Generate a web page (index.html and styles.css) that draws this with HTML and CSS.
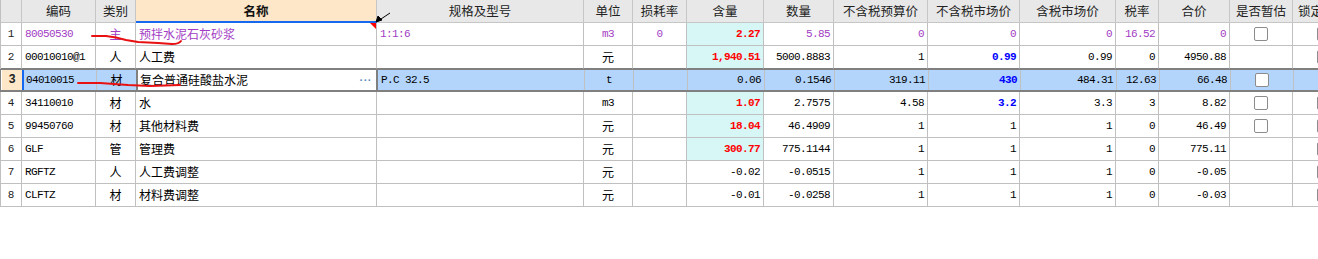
FILE: index.html
```html
<!DOCTYPE html>
<html lang="zh">
<head>
<meta charset="utf-8">
<title>材料明细</title>
<link rel="stylesheet" href="styles.css">
</head>
<body>
<div class="sheet">
  <div class="grid">
    <div class="row head">
      <div class="c"></div>
      <div class="c">编码</div>
      <div class="c">类别</div>
      <div class="c hname">名称</div>
      <div class="c">规格及型号</div>
      <div class="c">单位</div>
      <div class="c">损耗率</div>
      <div class="c">含量</div>
      <div class="c">数量</div>
      <div class="c">不含税预算价</div>
      <div class="c">不含税市场价</div>
      <div class="c">含税市场价</div>
      <div class="c">税率</div>
      <div class="c">合价</div>
      <div class="c">是否暂估</div>
      <div class="c lock">锁定</div>
    </div>

    <div class="row">
      <div class="c no">1</div>
      <div class="c m l p">80050530</div>
      <div class="c ctr p">主</div>
      <div class="c l p note">预拌水泥石灰砂浆</div>
      <div class="c m l p">1:1:6</div>
      <div class="c m ctr p">m3</div>
      <div class="c m ctr p">0</div>
      <div class="c m n r cy">2.27</div>
      <div class="c m n p">5.85</div>
      <div class="c m n p">0</div>
      <div class="c m n p">0</div>
      <div class="c m n p">0</div>
      <div class="c m n p">16.52</div>
      <div class="c m n p">0</div>
      <div class="c ctr"><span class="box"></span></div>
      <div class="c ctr"><span class="box"></span></div>
    </div>

    <div class="row pre">
      <div class="c no">2</div>
      <div class="c m l">00010010@1</div>
      <div class="c ctr">人</div>
      <div class="c l">人工费</div>
      <div class="c"></div>
      <div class="c ctr">元</div>
      <div class="c"></div>
      <div class="c m n r cy">1,940.51</div>
      <div class="c m n">5000.8883</div>
      <div class="c m n">1</div>
      <div class="c m n b">0.99</div>
      <div class="c m n">0.99</div>
      <div class="c m n">0</div>
      <div class="c m n">4950.88</div>
      <div class="c"></div>
      <div class="c ctr"><span class="box"></span></div>
    </div>

    <div class="row sel">
      <div class="c no cur">3</div>
      <div class="c m l first">04010015</div>
      <div class="c ctr beforeedit">材</div>
      <div class="c l edit"><span>复合普通硅酸盐水泥</span><span class="dots">···</span></div>
      <div class="c m l">P.C 32.5</div>
      <div class="c m ctr">t</div>
      <div class="c"></div>
      <div class="c m n">0.06</div>
      <div class="c m n">0.1546</div>
      <div class="c m n">319.11</div>
      <div class="c m n b">430</div>
      <div class="c m n">484.31</div>
      <div class="c m n">12.63</div>
      <div class="c m n">66.48</div>
      <div class="c ctr"><span class="box"></span></div>
      <div class="c ctr"><span class="box"></span></div>
    </div>

    <div class="row">
      <div class="c no">4</div>
      <div class="c m l">34110010</div>
      <div class="c ctr">材</div>
      <div class="c l">水</div>
      <div class="c"></div>
      <div class="c m ctr">m3</div>
      <div class="c"></div>
      <div class="c m n r cy">1.07</div>
      <div class="c m n">2.7575</div>
      <div class="c m n">4.58</div>
      <div class="c m n b">3.2</div>
      <div class="c m n">3.3</div>
      <div class="c m n">3</div>
      <div class="c m n">8.82</div>
      <div class="c ctr"><span class="box"></span></div>
      <div class="c ctr"><span class="box"></span></div>
    </div>

    <div class="row">
      <div class="c no">5</div>
      <div class="c m l">99450760</div>
      <div class="c ctr">材</div>
      <div class="c l">其他材料费</div>
      <div class="c"></div>
      <div class="c ctr">元</div>
      <div class="c"></div>
      <div class="c m n r cy">18.04</div>
      <div class="c m n">46.4909</div>
      <div class="c m n">1</div>
      <div class="c m n">1</div>
      <div class="c m n">1</div>
      <div class="c m n">0</div>
      <div class="c m n">46.49</div>
      <div class="c ctr"><span class="box"></span></div>
      <div class="c ctr"><span class="box"></span></div>
    </div>

    <div class="row">
      <div class="c no">6</div>
      <div class="c m l">GLF</div>
      <div class="c ctr">管</div>
      <div class="c l">管理费</div>
      <div class="c"></div>
      <div class="c ctr">元</div>
      <div class="c"></div>
      <div class="c m n r cy">300.77</div>
      <div class="c m n">775.1144</div>
      <div class="c m n">1</div>
      <div class="c m n">1</div>
      <div class="c m n">1</div>
      <div class="c m n">0</div>
      <div class="c m n">775.11</div>
      <div class="c"></div>
      <div class="c ctr"><span class="box"></span></div>
    </div>

    <div class="row">
      <div class="c no">7</div>
      <div class="c m l">RGFTZ</div>
      <div class="c ctr">人</div>
      <div class="c l">人工费调整</div>
      <div class="c"></div>
      <div class="c ctr">元</div>
      <div class="c"></div>
      <div class="c m n">-0.02</div>
      <div class="c m n">-0.0515</div>
      <div class="c m n">1</div>
      <div class="c m n">1</div>
      <div class="c m n">1</div>
      <div class="c m n">0</div>
      <div class="c m n">-0.05</div>
      <div class="c"></div>
      <div class="c ctr"><span class="box"></span></div>
    </div>

    <div class="row">
      <div class="c no">8</div>
      <div class="c m l">CLFTZ</div>
      <div class="c ctr">材</div>
      <div class="c l">材料费调整</div>
      <div class="c"></div>
      <div class="c ctr">元</div>
      <div class="c"></div>
      <div class="c m n">-0.01</div>
      <div class="c m n">-0.0258</div>
      <div class="c m n">1</div>
      <div class="c m n">1</div>
      <div class="c m n">1</div>
      <div class="c m n">0</div>
      <div class="c m n">-0.03</div>
      <div class="c"></div>
      <div class="c ctr"><span class="box"></span></div>
    </div>
  </div>

  <svg class="marks" width="1318" height="259" viewBox="0 0 1318 259" aria-hidden="true">
    <path d="M92 36 L106 36 Q116 37 126 40 L138 42 L158 43 L172 44 Q179 44 181 41" fill="none" stroke="#e81010" stroke-width="2" stroke-linecap="round" stroke-linejoin="round"/>
    <path d="M78 83 L100 83 L128 85 L150 86 L180 85" fill="none" stroke="#e81010" stroke-width="2" stroke-linecap="round" stroke-linejoin="round"/>
    <path d="M390 13 L381 19" fill="none" stroke="#000" stroke-width="1"/>
    <path d="M376 22 L378 16 L382 20 Z" fill="#000" stroke="#000" stroke-width="1" stroke-linejoin="round"/>
  </svg>
</div>
</body>
</html>
```

FILE: styles.css
```css
html, body {
  margin: 0;
  padding: 0;
  background: #ffffff;
}

body {
  width: 1318px;
  height: 259px;
  overflow: hidden;
  font-family: "Noto Sans CJK SC", "Liberation Sans", sans-serif;
  font-size: 12px;
  color: #000;
}

.sheet {
  position: relative;
  width: 1318px;
  height: 259px;
  overflow: hidden;
}

.grid {
  width: max-content;
  border-left: 1px solid #c0c0c0;
}

.row {
  display: grid;
  grid-template-columns: 21px 74px 40px 241px 207px 49px 54px 77px 70px 94px 92px 96px 43px 71px 63px 62px;
  height: 23px;
}

.c {
  box-sizing: border-box;
  height: 23px;
  border-right: 1px solid #c0c0c0;
  border-bottom: 1px solid #c0c0c0;
  line-height: 22px;
  white-space: nowrap;
  overflow: hidden;
  display: flex;
  align-items: center;
  position: relative;
}

.head .c {
  background: #e8e8e8;
  justify-content: center;
  color: #222;
  font-size: 12.5px;
  border-right-color: #c6c6c6;
  border-bottom-color: #c6c6c6;
}

.head .hname {
  background: #fde7c8;
  font-weight: bold;
  color: #111;
  border-bottom: 2px solid #1768f0;
}

.head .lock {
  justify-content: flex-start;
  padding-left: 5px;
}

.no {
  justify-content: center;
  font-family: "Liberation Mono", monospace;
  font-size: 11px;
  color: #222;
}

.m {
  font-family: "Liberation Mono", "Noto Sans CJK SC", monospace;
  font-size: 11px;
  letter-spacing: -0.6px;
}

.l {
  justify-content: flex-start;
  padding-left: 3px;
}

.ctr {
  justify-content: center;
}

.n {
  justify-content: flex-end;
  padding-right: 3px;
}

.p {
  color: #a23cc4;
}

.r {
  color: #ff0000;
  font-weight: bold;
}

.b {
  color: #0000ff;
  font-weight: bold;
}

.cy {
  background: #d7f6f6;
}

.note::after {
  content: "";
  position: absolute;
  top: 0;
  right: 0;
  width: 0;
  height: 0;
  border-top: 6px solid #ff0000;
  border-left: 6px solid transparent;
}

.box {
  display: block;
  box-sizing: border-box;
  width: 14px;
  height: 14px;
  border: 1px solid #8c8c8c;
  border-radius: 2px;
  background: #fff;
}

/* row above the selection */
.pre .c {
  border-bottom-color: #808080;
}

/* selected row */
.sel {
  border-top: 1px solid #808080;
  border-bottom: 2px solid #808080;
  height: 20px;
  margin-left: -1px;
  padding-left: 1px;
  border-left: 1px solid #808080;
  box-sizing: content-box;
}

.sel .c {
  height: 20px;
  line-height: 20px;
  border-bottom: none;
  background: #b4d5fb;
}

.sel .cur {
  background: #fde7c8;
  border-right: 1px solid #1768f0;
  font-weight: bold;
  font-size: 12px;
}

.sel .first {
  border-left: 1px solid #1768f0;
  padding-left: 2px;
}

.sel .beforeedit {
  border-right-color: #808080;
}

.sel .edit {
  background: #fff;
  border-left: 1px solid #808080;
  border-right: 2px solid #808080;
  justify-content: space-between;
  padding-left: 2px;
  padding-right: 4px;
}

.dots {
  color: #5a8cc8;
  font-family: "Liberation Sans", sans-serif;
  font-weight: bold;
  letter-spacing: 0.5px;
  font-size: 11px;
}

.marks {
  position: absolute;
  top: 0;
  left: 0;
  pointer-events: none;
}
```
